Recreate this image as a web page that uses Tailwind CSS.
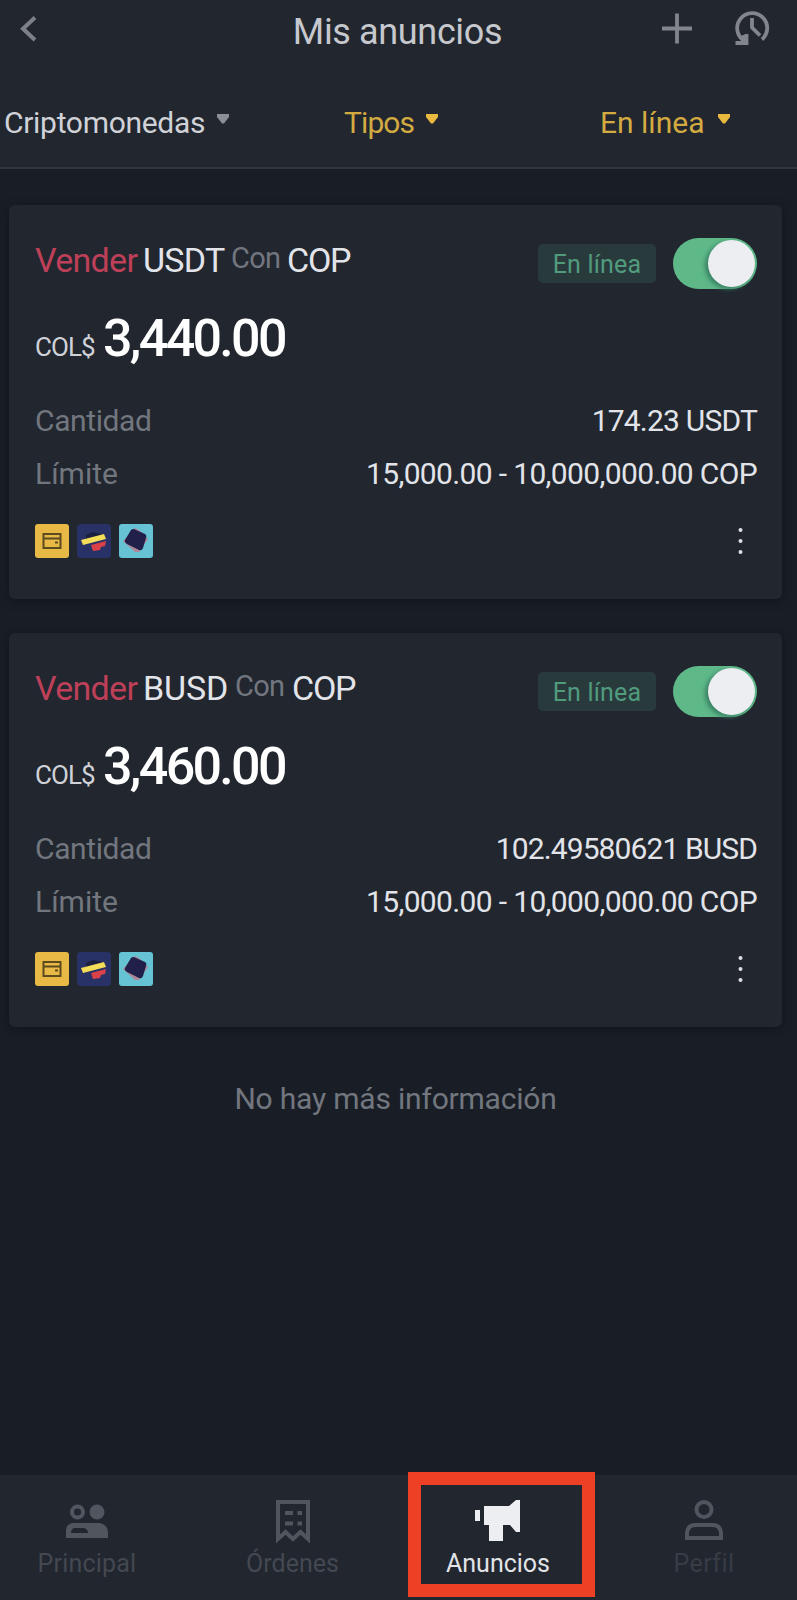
<!DOCTYPE html>
<html lang="es">
<head>
    <meta charset="UTF-8">
    <meta name="viewport" content="width=device-width, initial-scale=1.0">
    <title>Mis anuncios</title>
    <script src="https://cdn.jsdelivr.net/npm/@tailwindcss/browser@4"></script>
</head>
<body class="bg-[#191e26] font-['Roboto','Liberation_Sans',sans-serif] text-[#e2e4e9]">
    <div class="w-[797px] h-[1600px] flex flex-col overflow-hidden">
        <!-- Header -->
        <header class="h-[169px] shrink-0 bg-[#21262f] border-b-2 border-[#30353e]">
            <div class="h-[62px] flex items-center justify-between pl-5 pr-6">
                <svg class="w-[114px] h-[62px]" viewBox="20 0 114 62" fill="none" stroke="#7d8087" stroke-width="4"><path d="M35 17.500L23 28.700L35 40"/></svg>
                <h1 class="pt-[2px] text-[36px] leading-[62px] tracking-[-0.35px] text-[#c6c8ce]">Mis anuncios</h1>
                <svg class="w-[112px] h-[62px]" viewBox="661 0 112 62" fill="none" stroke="#82858c" stroke-width="3.800">
                    <path d="M677 13.500V43.500M662 28.500H692"/>
                    <path d="M743 40A15 15 0 1 1 762 39.500"/>
                    <path d="M735.500 43H746.500V34M752 18V27.500L760 35.500"/>
                    <path d="M740 36L747 34V44L737 44L742 41Z" fill="#82858c" stroke="none"/>
                </svg>
            </div>
            <div class="h-[105px] grid grid-cols-[344px_256px_1fr] pt-[38px] text-[30px] leading-[45px]">
                <div class="flex pl-[4px]">
                    <span class="tracking-[-0.3px] text-[#d0d2d7]">Criptomonedas</span>
                    <svg class="ml-[12px] mt-[14px] w-3 h-[10px]" viewBox="0 0 12 10" fill="#8b8e94"><path d="M0 0H12V3L7 9.500H5L0 3Z"/></svg>
                </div>
                <div class="flex text-[#d3ab41]">
                    <span class="tracking-[-0.9px]">Tipos</span>
                    <svg class="ml-[12px] mt-[14px] w-3 h-[10px]" viewBox="0 0 12 10" fill="#e8b93e"><path d="M0 0H12V3L7 9.500H5L0 3Z"/></svg>
                </div>
                <div class="flex text-[#d3ab41]">
                    <span>En línea</span>
                    <svg class="ml-[13px] mt-[14px] w-3 h-[10px]" viewBox="0 0 12 10" fill="#e8b93e"><path d="M0 0H12V3L7 9.500H5L0 3Z"/></svg>
                </div>
            </div>
        </header>

        <!-- Ads -->
        <main class="flex-1 pt-9 pl-[9px] pr-[15px]">
            <section class="h-[394px] mb-[34px] pl-[26px] pr-[25px] rounded-md bg-[#21262f] shadow-[0_2px_8px_#11151c]">
                <div class="h-[98px] flex items-center justify-between pt-[19px]">
                    <div class="h-[79px] flex text-[34px] leading-[72px] tracking-[-0.7px]">
                        <span class="w-[108px] text-[#bd4058]">Vender</span>
                        <span class="w-[88px] tracking-[-0.7px]">USDT</span>
                        <span class="w-[56px] text-[29px] leading-[69px] text-[#72767f]">Con</span>
                        <span class="tracking-[-1.2px]">COP</span>
                    </div>
                    <div class="flex items-center gap-[17px]">
                        <span class="w-[118px] h-[39px] rounded-[5px] bg-[#293a3d] text-center text-[25px] leading-[42px] tracking-[0.2px] text-[#519b7d]">En línea</span>
                        <div class="w-[84px] h-[51px] p-[2px] flex justify-end rounded-full bg-[#5eb888]">
                            <div class="size-[47px] rounded-full bg-[#edeef2] shadow-[-3px_2px_4px_#398264]"></div>
                        </div>
                    </div>
                </div>
                <div class="h-[90px] flex items-baseline">
                    <span class="w-[68px] text-[26px] tracking-[-0.9px] text-[#d0d2d8]">COL$</span>
                    <span class="text-[52px] leading-[72px] font-medium tracking-[-2.700px] text-white">3,440.00</span>
                </div>
                <div class="h-[53px] flex justify-between text-[30px] leading-[55px]">
                    <span class="tracking-[-0.4px] text-[#72767e]">Cantidad</span>
                    <span class="tracking-[-0.8px]">174.23 USDT</span>
                </div>
                <div class="h-[53px] flex justify-between text-[30px] leading-[55px]">
                    <span class="text-[#72767e]">Límite</span>
                    <span class="tracking-[-0.65px]">15,000.00 - 10,000,000.00 COP</span>
                </div>
                <div class="h-[84px] flex items-center justify-between">
                    <div class="flex gap-2">
                        <svg class="size-[34px]" viewBox="0 0 34 34"><rect width="34" height="34" rx="3" fill="#e8b944"/><path d="M8.500 10H25.500V24H8.500ZM8 14.500H26" fill="none" stroke="#5d4b20" stroke-width="2"/><path d="M20 17.500H23V19.500H20Z" fill="#5d4b20"/></svg>
                        <svg class="size-[34px]" viewBox="0 0 34 34"><rect width="34" height="34" rx="4" fill="#293267"/><path d="M9 11L16 8L25 10L24 13L9 15Z" fill="#1b203e"/><path d="M14 21L29 17L28 22L24 23L23 26L16 27Z" fill="#db4148"/><path d="M4 16L27 10L29 15L6 21Z" fill="#f4dd58"/></svg>
                        <svg class="size-[34px]" viewBox="0 0 34 34"><rect width="34" height="34" rx="3" fill="#65c3d3"/><path d="M16 4L20 6L29 15L20 28L16 28L4 17Z" fill="#ad8798"/><path d="M12 6Q14 4 17 6L26 10Q28 11 27 14L24 24Q23 27 20 26L8 20Q5 18 6 16Z" fill="#20204b"/></svg>
                    </div>
                    <svg class="w-[34px] h-[34px]" viewBox="0 0 34 34" fill="#dddfe3"><circle cx="17.500" cy="6" r="2"/><circle cx="17.500" cy="17" r="2"/><circle cx="17.500" cy="28" r="2"/></svg>
                </div>
            </section>

            <section class="h-[394px] pl-[26px] pr-[25px] rounded-md bg-[#21262f] shadow-[0_2px_8px_#11151c]">
                <div class="h-[98px] flex items-center justify-between pt-[19px]">
                    <div class="h-[79px] flex text-[34px] leading-[72px] tracking-[-0.7px]">
                        <span class="w-[108px] text-[#bd4058]">Vender</span>
                        <span class="w-[92px] tracking-[-0.1px]">BUSD</span>
                        <span class="w-[57px] text-[29px] leading-[69px] text-[#72767f]">Con</span>
                        <span class="tracking-[-1.2px]">COP</span>
                    </div>
                    <div class="flex items-center gap-[17px]">
                        <span class="w-[118px] h-[39px] rounded-[5px] bg-[#293a3d] text-center text-[25px] leading-[42px] tracking-[0.2px] text-[#519b7d]">En línea</span>
                        <div class="w-[84px] h-[51px] p-[2px] flex justify-end rounded-full bg-[#5eb888]">
                            <div class="size-[47px] rounded-full bg-[#edeef2] shadow-[-3px_2px_4px_#398264]"></div>
                        </div>
                    </div>
                </div>
                <div class="h-[90px] flex items-baseline">
                    <span class="w-[68px] text-[26px] tracking-[-0.9px] text-[#d0d2d8]">COL$</span>
                    <span class="text-[52px] leading-[72px] font-medium tracking-[-2.700px] text-white">3,460.00</span>
                </div>
                <div class="h-[53px] flex justify-between text-[30px] leading-[55px]">
                    <span class="tracking-[-0.4px] text-[#72767e]">Cantidad</span>
                    <span class="tracking-[-0.9px]">102.49580621 BUSD</span>
                </div>
                <div class="h-[53px] flex justify-between text-[30px] leading-[55px]">
                    <span class="text-[#72767e]">Límite</span>
                    <span class="tracking-[-0.65px]">15,000.00 - 10,000,000.00 COP</span>
                </div>
                <div class="h-[84px] flex items-center justify-between">
                    <div class="flex gap-2">
                        <svg class="size-[34px]" viewBox="0 0 34 34"><rect width="34" height="34" rx="3" fill="#e8b944"/><path d="M8.500 10H25.500V24H8.500ZM8 14.500H26" fill="none" stroke="#5d4b20" stroke-width="2"/><path d="M20 17.500H23V19.500H20Z" fill="#5d4b20"/></svg>
                        <svg class="size-[34px]" viewBox="0 0 34 34"><rect width="34" height="34" rx="4" fill="#293267"/><path d="M9 11L16 8L25 10L24 13L9 15Z" fill="#1b203e"/><path d="M14 21L29 17L28 22L24 23L23 26L16 27Z" fill="#db4148"/><path d="M4 16L27 10L29 15L6 21Z" fill="#f4dd58"/></svg>
                        <svg class="size-[34px]" viewBox="0 0 34 34"><rect width="34" height="34" rx="3" fill="#65c3d3"/><path d="M16 4L20 6L29 15L20 28L16 28L4 17Z" fill="#ad8798"/><path d="M12 6Q14 4 17 6L26 10Q28 11 27 14L24 24Q23 27 20 26L8 20Q5 18 6 16Z" fill="#20204b"/></svg>
                    </div>
                    <svg class="w-[34px] h-[34px]" viewBox="0 0 34 34" fill="#dddfe3"><circle cx="17.500" cy="6" r="2"/><circle cx="17.500" cy="17" r="2"/><circle cx="17.500" cy="28" r="2"/></svg>
                </div>
            </section>

            <p class="mt-[50px] text-center text-[30px] leading-[44px] tracking-[-0.2px] text-[#72767e]">No hay más información</p>
        </main>

        <!-- Bottom navigation -->
        <nav class="relative h-[125px] shrink-0 bg-[#21262f] grid grid-cols-[190px_205px_207px_205px] text-center text-[25px] leading-[36px] text-[#444851]">
            <div class="flex flex-col items-center pt-[23px] pr-4">
                <svg class="w-[42px] h-[46px]" viewBox="0 0 42 46" fill="#51555e"><circle cx="11.500" cy="14" r="5.500" fill="none" stroke="#51555e" stroke-width="4"/><circle cx="31" cy="14" r="7.500"/><path fill-rule="evenodd" d="M6 25H34Q42 27 42 35V40H0V32Q0 27 6 25ZM8 30Q5 31 5 35H22Q22 31 18 30Z"/></svg>
                <span class="mt-[2px] tracking-[0.2px]">Principal</span>
            </div>
            <div class="flex flex-col items-center pt-[23px]">
                <svg class="w-[36px] h-[46px]" viewBox="0 0 36 46" fill="none" stroke="#51555e" stroke-width="4"><path d="M3 4H33V41L25.500 34L18 41L10.500 34L3 41Z"/><path d="M10 15H18M10 25.500H18M22.500 15H27M22.500 25.500H27"/></svg>
                <span class="mt-[2px]">Órdenes</span>
            </div>
            <div class="flex flex-col items-center pt-[23px] pr-px text-[#e2e4e8]">
                <svg class="w-[46px] h-[46px]" viewBox="0 0 46 46" fill="#eceef2"><path d="M0 12H5V23H0ZM9 8H34L41 2H45V34H41L35 27H28V43H14V27H9Z"/></svg>
                <span class="mt-[2px]">Anuncios</span>
            </div>
            <div class="flex flex-col items-center pt-[23px] pr-px">
                <svg class="w-[38px] h-[46px]" viewBox="0 0 38 46" fill="none" stroke="#51555e" stroke-width="4"><circle cx="19" cy="11.500" r="7.500"/><path d="M2 40V35Q3 27 10 27H28Q35 27 36 35V40Z"/></svg>
                <span class="mt-[2px] tracking-[0.4px] text-[#383c45]">Perfil</span>
            </div>
            <!-- Active tab frame -->
            <div class="absolute left-[408px] top-[-3px] w-[187px] h-[125px] border-[13px] border-[#ed4024]"></div>
        </nav>
    </div>
</body>
</html>
